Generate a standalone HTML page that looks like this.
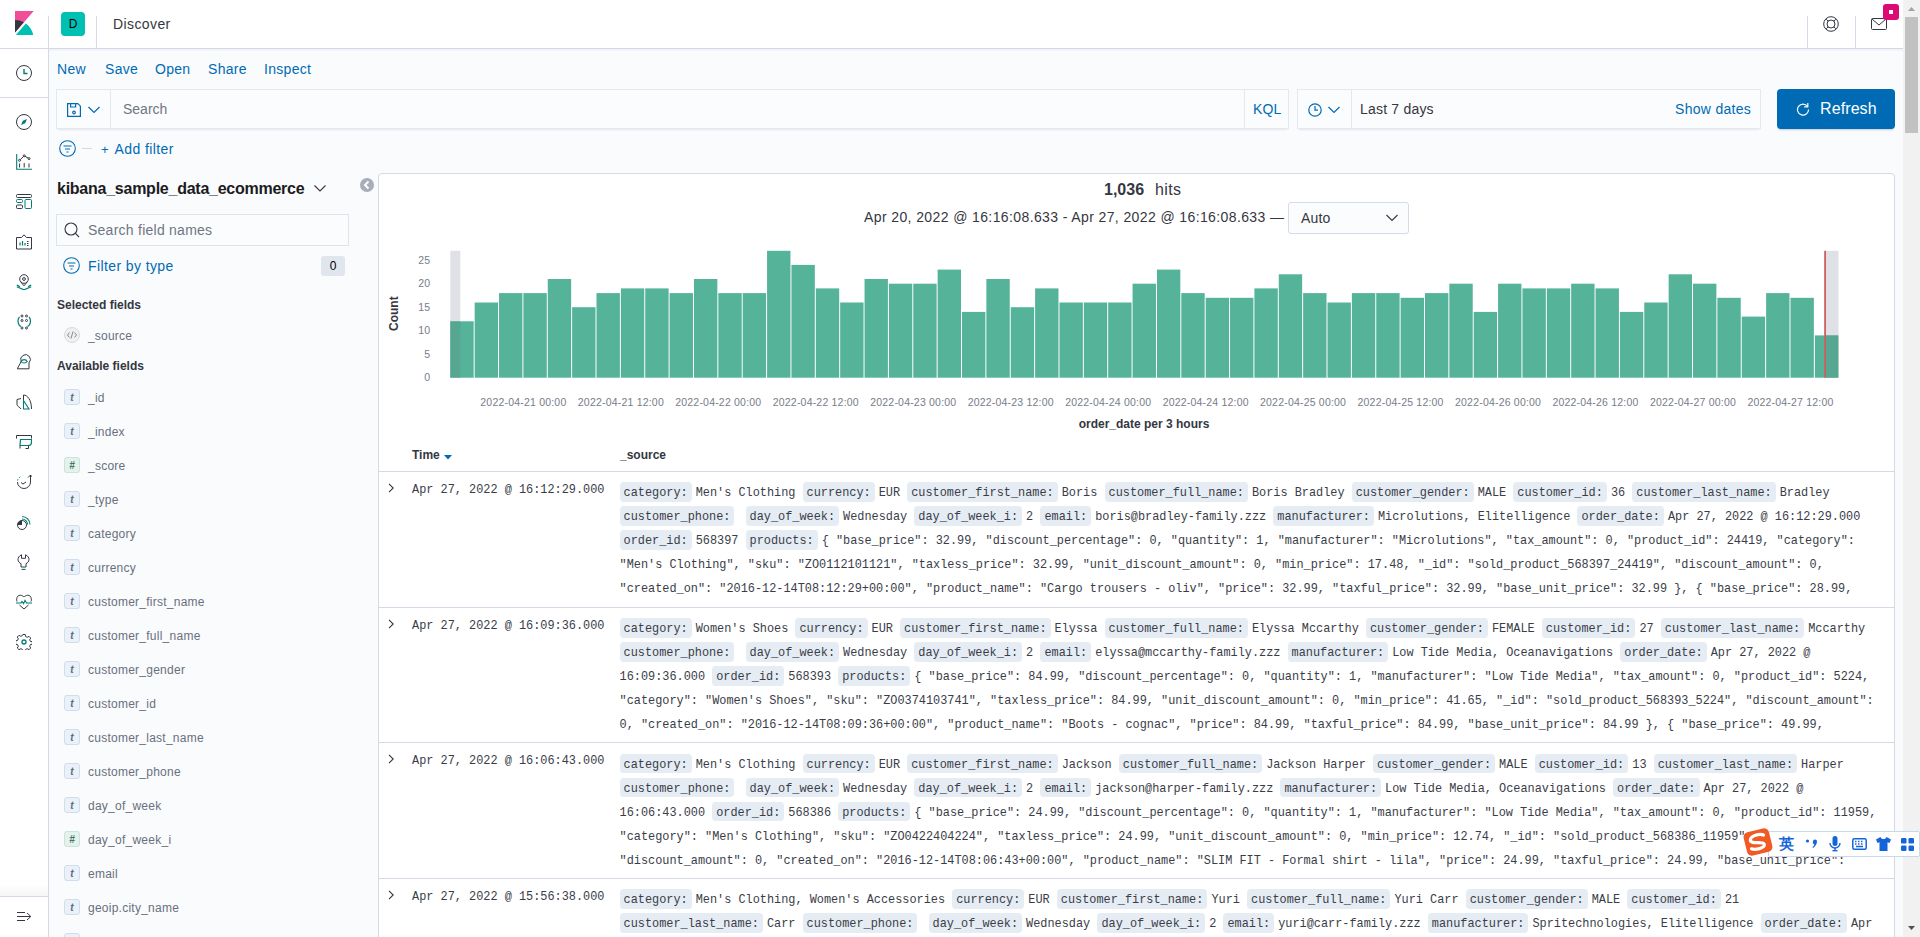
<!DOCTYPE html><html><head><meta charset="utf-8"><style>
*{box-sizing:border-box;margin:0;padding:0}
html,body{width:1920px;height:937px;overflow:hidden;background:#fafbfd;font-family:"Liberation Sans",sans-serif;color:#343741}
.abs{position:absolute}
.t{position:absolute;white-space:pre;line-height:1}
.tm{position:absolute;white-space:pre;font-family:"Liberation Mono",monospace;font-size:11.89px;line-height:24px;color:#3a3d48}
.src{position:absolute;white-space:pre;font-family:"Liberation Mono",monospace;font-size:11.89px;line-height:24px;color:#3a3d48}
.src b{font-weight:normal;background:#e5ecf3;padding:4px 4px 1.7px;margin-right:4px;border-radius:4px}
svg{display:block}
</style></head><body>

<div class="abs" style="left:0;top:0;width:1903px;height:49px;background:#fff;border-bottom:1px solid #d3dae6;box-shadow:0 1px 2px rgba(152,162,179,.15)"></div>
<svg class="abs" style="left:12px;top:11px" width="24" height="24" viewBox="0 0 32 32"><path fill="#F04E98" d="M4 0v28.789L28.935.017z"/><path fill="#343741" d="M4 12v16.789l11.906-13.738A24.721 24.721 0 004 12"/><path fill="#00BFB3" d="M18.479 16.664L6.268 30.754l-1.073 1.237h23.191c-1.252-6.292-4.883-11.719-9.908-15.327"/></svg>
<div class="abs" style="left:48px;top:16px;width:1px;height:32px;background:#d3dae6"></div>
<div class="abs" style="left:96px;top:16px;width:1px;height:32px;background:#d3dae6"></div>
<div class="abs" style="left:61px;top:12px;width:24px;height:24px;background:#00bfb3;border-radius:4px"></div>
<div class="t" style="left:61px;top:18px;width:24px;text-align:center;font-size:12px;color:#000">D</div>
<div class="t" style="left:113px;top:17px;font-size:14px;letter-spacing:.4px;color:#343741">Discover</div>
<div class="abs" style="left:1807px;top:16px;width:1px;height:32px;background:#d3dae6"></div>
<div class="abs" style="left:1855px;top:16px;width:1px;height:32px;background:#d3dae6"></div>
<svg class="abs" style="left:1823px;top:16px" width="16" height="16" viewBox="0 0 16 16" fill="none" stroke="#343741" stroke-width="1"><circle cx="8" cy="8" r="7.3"/><circle cx="8" cy="8" r="4"/><path d="M3.2 3.2l2 2M12.8 3.2l-2 2M3.2 12.8l2-2M12.8 12.8l-2-2"/></svg>
<svg class="abs" style="left:1871px;top:17px" width="16" height="14" viewBox="0 0 16 14" fill="none" stroke="#343741" stroke-width="1"><rect x=".5" y="1.5" width="15" height="11" rx="1"/><path d="M1 2l7 6 7-6"/></svg>
<div class="abs" style="left:1883px;top:4px;width:16px;height:16px;background:#dd0a73;border-radius:3px"></div>
<div class="abs" style="left:1889px;top:10px;width:4px;height:4px;background:#fff"></div>
<div class="abs" style="left:0;top:49px;width:49px;height:888px;background:#fff;border-right:1px solid #d3dae6"></div>
<div class="abs" style="left:0;top:97px;width:48px;height:1px;background:#d3dae6"></div>
<div class="abs" style="left:0;top:884px;width:48px;height:12px;background:linear-gradient(rgba(255,255,255,0),rgba(152,162,179,.1))"></div>
<div class="abs" style="left:0;top:896px;width:48px;height:1px;background:#d3dae6"></div>
<svg class="abs" style="left:16px;top:65px" width="16" height="16" viewBox="0 0 16 16" fill="none"><circle cx="8" cy="8" r="7.5" stroke="#343741"/><path d="M8 4v4.5h3.5" stroke="#017d73" stroke-width="1.4"/></svg>
<svg class="abs" style="left:16px;top:114px" width="16" height="16" viewBox="0 0 16 16" fill="none"><circle cx="8" cy="8" r="7.5" stroke="#343741"/><path d="M11 5L9.2 9.2 5 11 6.8 6.8z" fill="#017d73"/></svg>
<svg class="abs" style="left:16px;top:154px" width="16" height="16" viewBox="0 0 16 16" fill="none"><path d="M.7 0v15.3H16" stroke="#017d73" stroke-width="1.1"/><path d="M3.6 9.5v4M8.2 9v4.5M13 9.5v4" stroke="#343741"/><path d="M3.6 6.3L8.2 1.8 13 4.6" stroke="#343741"/><circle cx="3.6" cy="6.3" r="1" fill="#fff" stroke="#343741"/><circle cx="8.2" cy="1.8" r="1" fill="#fff" stroke="#343741"/><circle cx="13" cy="4.6" r="1" fill="#fff" stroke="#343741"/></svg>
<svg class="abs" style="left:16px;top:194px" width="16" height="16" viewBox="0 0 16 16" fill="none"><rect x=".5" y=".5" width="15" height="3" rx="1" stroke="#343741"/><rect x=".5" y="5.5" width="6" height="3" rx="1" stroke="#017d73"/><rect x=".5" y="11" width="6" height="3.5" rx="1" stroke="#343741"/><rect x="9" y="5.5" width="6.5" height="9" rx="1" stroke="#017d73"/></svg>
<svg class="abs" style="left:16px;top:234px" width="16" height="16" viewBox="0 0 16 16" fill="none"><path d="M.5 3.5h5L8 .8l2.5 2.7h5v11.5H.5z" stroke="#343741"/><path d="M4 11.5v-3M6.5 11.5V7M9 11.5v-2.5" stroke="#017d73" stroke-width="1.2"/><path d="M11 7.5h1.5M11 9.5h1.5M11 11.5h1.5" stroke="#343741"/></svg>
<svg class="abs" style="left:16px;top:274px" width="16" height="16" viewBox="0 0 16 16" fill="none"><circle cx="8" cy="5" r="4.3" stroke="#343741"/><circle cx="8" cy="5" r="1.4" stroke="#343741"/><path d="M5 8.3L8 11.8l3-3.5" stroke="#343741"/><path d="M.8 11l3 1.6M15.2 11l-3 1.6" stroke="#017d73" stroke-width="1.2"/><path d="M.8 12.8l7.2 3 7.2-3" stroke="#017d73" stroke-width="1.2"/></svg>
<svg class="abs" style="left:16px;top:314px" width="16" height="16" viewBox="0 0 16 16" fill="none"><circle cx="6" cy="2" r="1" stroke="#343741"/><circle cx="10.5" cy="2" r="1" stroke="#343741"/><circle cx="6" cy="6.5" r="1" stroke="#343741"/><circle cx="10.5" cy="6.5" r="1" stroke="#343741"/><circle cx="6" cy="14" r="1" stroke="#343741"/><circle cx="10.5" cy="14" r="1" stroke="#343741"/><path d="M3.5 3C1.5 5 1.5 9 3.5 11.5l1.5 1M13 3c2 2 2 6 0 8.5l-1.5 1" stroke="#017d73" stroke-width="1.2"/></svg>
<svg class="abs" style="left:16px;top:354px" width="16" height="16" viewBox="0 0 16 16" fill="none"><path d="M5.2 7.5A4.8 4.8 0 1113 8.8v6H1.3z" stroke="#343741"/><path d="M5 7.5C6.5 5 10 5 11.2 7.5 10 9.5 6.5 9.5 5 7.5z" stroke="#017d73" stroke-width="1.1"/></svg>
<svg class="abs" style="left:16px;top:394px" width="16" height="16" viewBox="0 0 16 16" fill="none"><path d="M5 15c-1-2-4-2.5-4-4.5v-5L5 4.5" stroke="#343741"/><path d="M7.5 15V1c4 0 8 5 8 14" stroke="#343741"/><path d="M7.5 15V6.5l5.5 8.5z" stroke="#017d73" stroke-width="1.1"/></svg>
<svg class="abs" style="left:16px;top:434px" width="16" height="16" viewBox="0 0 16 16" fill="none"><path d="M.5 4.5v-3h15v3M4 14.5V12M12.5 12v2.5H9.5" stroke="#343741"/><path d="M4.5 5.5h11v2.5c0 2-1.5 3.5-3.5 3.5h-8z" stroke="#017d73" stroke-width="1.2"/></svg>
<svg class="abs" style="left:16px;top:474px" width="16" height="16" viewBox="0 0 16 16" fill="none"><path d="M1.5 6.5a6.5 6.5 0 013.5-4" stroke="#017d73" stroke-dasharray="1.5 1.5"/><path d="M1.5 8a6.5 6.5 0 0013 0V1M12 3.5l2.5-2.5 2.5 2.5" stroke="#343741"/><path d="M5 8.5l2 1.5 3-2" stroke="#343741"/></svg>
<svg class="abs" style="left:16px;top:514px" width="16" height="16" viewBox="0 0 16 16" fill="none"><circle cx="6" cy="11" r="4.5" stroke="#343741"/><path d="M6 11V6.5A4.5 4.5 0 001.5 11z" fill="#343741"/><path d="M6 2.5a8 8 0 018 8M6 5a5.5 5.5 0 015.5 5.5" stroke="#017d73" stroke-width="1.2"/></svg>
<svg class="abs" style="left:16px;top:554px" width="16" height="16" viewBox="0 0 16 16" fill="none"><path d="M5.5 .8C3 1.8 2 4 2 5.5c0 2 1.5 3.5 3 4.2V13h5V9.7c1.5-.7 3-2.2 3-4.2 0-1.5-1-3.7-3.5-4.7v3.5h-4z" stroke="#343741"/><path d="M5.5 15.5h4" stroke="#017d73" stroke-width="1.3"/></svg>
<svg class="abs" style="left:16px;top:594px" width="16" height="16" viewBox="0 0 16 16" fill="none"><path d="M1 7.5C.3 6 .5 1.2 4.3 1.2 6.2 1.2 8 3 8 3s1.8-1.8 3.7-1.8C15.5 1.2 15.7 6 15 7.5M3.5 11L8 15l4.5-4" stroke="#343741"/><path d="M0 9h5l1-1.5 1.5 2 1.5-3 1.5 2.5H16" stroke="#017d73" stroke-width="1.2"/></svg>
<svg class="abs" style="left:16px;top:634px" width="16" height="16" viewBox="0 0 16 16" fill="none"><path d="M6.8.5h2.4l.4 2 1.6.8 1.8-1 1.7 1.7-1 1.8.7 1.6 2 .4v2.4l-2 .4-.7 1.6 1 1.8-1.7 1.7-1.8-1-1.6.7-.4 2H6.8l-.4-2-1.6-.7-1.8 1-1.7-1.7 1-1.8-.7-1.6-2-.4V6.8l2-.4.7-1.6-1-1.8L3 1.3l1.8 1 1.6-.8z" stroke="#343741"/><circle cx="8" cy="8" r="2" stroke="#017d73" stroke-width="1.3"/></svg>
<svg class="abs" style="left:17px;top:911px" width="16" height="12" viewBox="0 0 16 12" fill="none" stroke="#343741" stroke-width="1"><path d="M0 1.5h8M0 5.5h13.5M0 9.5h8M10 2l3.8 3.5L10 9"/></svg>
<div class="t" style="left:57px;top:62px;font-size:14px;letter-spacing:.3px;color:#006bb4">New</div>
<div class="t" style="left:105px;top:62px;font-size:14px;letter-spacing:.3px;color:#006bb4">Save</div>
<div class="t" style="left:155px;top:62px;font-size:14px;letter-spacing:.3px;color:#006bb4">Open</div>
<div class="t" style="left:208px;top:62px;font-size:14px;letter-spacing:.3px;color:#006bb4">Share</div>
<div class="t" style="left:264px;top:62px;font-size:14px;letter-spacing:.3px;color:#006bb4">Inspect</div>
<div class="abs" style="left:56px;top:89px;width:1233px;height:40px;background:#fbfcfd;border:1px solid #e4e8ef;box-shadow:0 1px 1px -1px rgba(152,162,179,.2),0 3px 2px -2px rgba(152,162,179,.2)"></div>
<div class="abs" style="left:110px;top:90px;width:1px;height:38px;background:#e4e8ef"></div>
<div class="abs" style="left:1244px;top:90px;width:1px;height:38px;background:#e4e8ef"></div>
<svg class="abs" style="left:67px;top:103px" width="14" height="14" viewBox="0 0 14 14" fill="none" stroke="#006bb4" stroke-width="1.2"><path d="M.6.6h10.2l2.6 2.6v10.2H.6z"/><path d="M3.6.6v3.4h5V.6"/><circle cx="7" cy="9.5" r="1.3"/></svg>
<svg class="abs" style="left:88px;top:106px" width="12" height="8" viewBox="0 0 12 8" fill="none" stroke="#006bb4" stroke-width="1.2"><path d="M.5 1l5.5 5.5L11.5 1"/></svg>
<div class="t" style="left:123px;top:102px;font-size:14px;color:#6f7683">Search</div>
<div class="t" style="left:1253px;top:102px;font-size:14px;letter-spacing:.1px;color:#006bb4">KQL</div>
<div class="abs" style="left:1297px;top:89px;width:464px;height:40px;background:#fbfcfd;border:1px solid #e4e8ef;box-shadow:0 1px 1px -1px rgba(152,162,179,.2),0 3px 2px -2px rgba(152,162,179,.2)"></div>
<div class="abs" style="left:1351px;top:90px;width:1px;height:38px;background:#e4e8ef"></div>
<svg class="abs" style="left:1308px;top:103px" width="14" height="14" viewBox="0 0 14 14" fill="none" stroke="#006bb4" stroke-width="1.2"><circle cx="7" cy="7" r="6.2"/><path d="M7 3v4.2h3"/></svg>
<svg class="abs" style="left:1328px;top:106px" width="12" height="8" viewBox="0 0 12 8" fill="none" stroke="#006bb4" stroke-width="1.2"><path d="M.5 1l5.5 5.5L11.5 1"/></svg>
<div class="t" style="left:1360px;top:102px;font-size:14px;letter-spacing:.2px;color:#343741">Last 7 days</div>
<div class="t" style="left:1675px;top:102px;font-size:14px;letter-spacing:.3px;color:#006bb4">Show dates</div>
<div class="abs" style="left:1777px;top:89px;width:118px;height:40px;background:#006bb4;border-radius:4px;box-shadow:0 2px 2px -1px rgba(54,97,126,.3)"></div>
<svg class="abs" style="left:1796px;top:102px" width="14" height="14" viewBox="0 0 14 14" fill="none" stroke="#fff" stroke-width="1.2"><path d="M11.5 4.5A5.5 5.5 0 1 0 12.5 7.5"/><path d="M11.8 1v3.8H8.2"/></svg>
<div class="t" style="left:1820px;top:101px;font-size:16px;letter-spacing:.1px;color:#fff">Refresh</div>
<svg class="abs" style="left:59px;top:140px" width="17" height="17" viewBox="0 0 17 17" fill="none" stroke="#006bb4" stroke-width="1.1"><circle cx="8.5" cy="8.5" r="7.8"/><path d="M4.5 6h8M6 9h5M7.5 12h2"/></svg>
<div class="abs" style="left:82px;top:148px;width:10px;height:1px;background:#d3dae6"></div>
<div class="t" style="left:101px;top:143px;font-size:13px;color:#006bb4">+</div>
<div class="t" style="left:114.5px;top:142px;font-size:14px;letter-spacing:.4px;color:#006bb4">Add filter</div>
<div class="t" style="left:57px;top:181px;font-size:16px;font-weight:700;letter-spacing:-.25px;color:#1a1c21">kibana_sample_data_ecommerce</div>
<svg class="abs" style="left:314px;top:185px" width="12" height="7" viewBox="0 0 12 7" fill="none" stroke="#343741" stroke-width="1.1"><path d="M.5.5L6 6 11.5.5"/></svg>
<svg class="abs" style="left:360px;top:178px" width="14" height="14" viewBox="0 0 14 14"><circle cx="7" cy="7" r="7" fill="#a7aeb8"/><path d="M8.5 3.5L5 7l3.5 3.5" fill="none" stroke="#fff" stroke-width="2"/></svg>
<div class="abs" style="left:56px;top:214px;width:293px;height:32px;background:#fbfcfd;border:1px solid #dfe4ec"></div>
<svg class="abs" style="left:64px;top:222px" width="16" height="16" viewBox="0 0 16 16" fill="none" stroke="#343741" stroke-width="1.1"><circle cx="7" cy="7" r="6"/><path d="M11.2 11.2L15 15"/></svg>
<div class="t" style="left:88px;top:223px;font-size:14px;letter-spacing:.25px;color:#6f7683">Search field names</div>
<svg class="abs" style="left:63px;top:257px" width="17" height="17" viewBox="0 0 17 17" fill="none" stroke="#006bb4" stroke-width="1.1"><circle cx="8.5" cy="8.5" r="7.8"/><path d="M4.5 6h8M6 9h5M7.5 12h2"/></svg>
<div class="t" style="left:88px;top:259px;font-size:14px;letter-spacing:.4px;color:#006bb4">Filter by type</div>
<div class="abs" style="left:321px;top:256px;width:24px;height:20px;background:#e0e5ee;border-radius:3px"></div>
<div class="t" style="left:321px;top:260px;width:24px;text-align:center;font-size:12px;color:#000">0</div>
<div class="t" style="left:57px;top:299px;font-size:12px;font-weight:700;color:#343741">Selected fields</div>
<svg class="abs" style="left:64px;top:327px" width="16" height="16" viewBox="0 0 16 16" fill="none"><circle cx="8" cy="8" r="7.5" fill="#f0f0f0" stroke="#d9d9d9"/><path d="M5.5 5.5L3.5 8l2 2.5M10.5 5.5l2 2.5-2 2.5M9 4.5L7 11.5" stroke="#7a7a7a" stroke-width=".9"/></svg>
<div class="t" style="left:88px;top:330px;font-size:12px;letter-spacing:.2px;color:#69707d">_source</div>
<div class="t" style="left:57px;top:360px;font-size:12px;font-weight:700;color:#343741">Available fields</div>
<div class="abs" style="left:64px;top:389px;width:16px;height:16px;background:#ebf1f7;border:1px solid #cfdeee;border-radius:3px"></div>
<div class="t" style="left:64px;top:392.5px;width:16px;text-align:center;font-size:10px;font-weight:700;font-style:italic;color:#4e6f8f">t</div>
<div class="t" style="left:88px;top:391.5px;font-size:12px;letter-spacing:.25px;color:#69707d">_id</div>
<div class="abs" style="left:64px;top:423px;width:16px;height:16px;background:#ebf1f7;border:1px solid #cfdeee;border-radius:3px"></div>
<div class="t" style="left:64px;top:426.5px;width:16px;text-align:center;font-size:10px;font-weight:700;font-style:italic;color:#4e6f8f">t</div>
<div class="t" style="left:88px;top:425.5px;font-size:12px;letter-spacing:.25px;color:#69707d">_index</div>
<div class="abs" style="left:64px;top:457px;width:16px;height:16px;background:#e6f1ee;border:1px solid #c9e2da;border-radius:3px"></div>
<div class="t" style="left:64px;top:460.5px;width:16px;text-align:center;font-size:10px;font-weight:700;font-style:italic;color:#3f7a5c">#</div>
<div class="t" style="left:88px;top:459.5px;font-size:12px;letter-spacing:.25px;color:#69707d">_score</div>
<div class="abs" style="left:64px;top:491px;width:16px;height:16px;background:#ebf1f7;border:1px solid #cfdeee;border-radius:3px"></div>
<div class="t" style="left:64px;top:494.5px;width:16px;text-align:center;font-size:10px;font-weight:700;font-style:italic;color:#4e6f8f">t</div>
<div class="t" style="left:88px;top:493.5px;font-size:12px;letter-spacing:.25px;color:#69707d">_type</div>
<div class="abs" style="left:64px;top:525px;width:16px;height:16px;background:#ebf1f7;border:1px solid #cfdeee;border-radius:3px"></div>
<div class="t" style="left:64px;top:528.5px;width:16px;text-align:center;font-size:10px;font-weight:700;font-style:italic;color:#4e6f8f">t</div>
<div class="t" style="left:88px;top:527.5px;font-size:12px;letter-spacing:.25px;color:#69707d">category</div>
<div class="abs" style="left:64px;top:559px;width:16px;height:16px;background:#ebf1f7;border:1px solid #cfdeee;border-radius:3px"></div>
<div class="t" style="left:64px;top:562.5px;width:16px;text-align:center;font-size:10px;font-weight:700;font-style:italic;color:#4e6f8f">t</div>
<div class="t" style="left:88px;top:561.5px;font-size:12px;letter-spacing:.25px;color:#69707d">currency</div>
<div class="abs" style="left:64px;top:593px;width:16px;height:16px;background:#ebf1f7;border:1px solid #cfdeee;border-radius:3px"></div>
<div class="t" style="left:64px;top:596.5px;width:16px;text-align:center;font-size:10px;font-weight:700;font-style:italic;color:#4e6f8f">t</div>
<div class="t" style="left:88px;top:595.5px;font-size:12px;letter-spacing:.25px;color:#69707d">customer_first_name</div>
<div class="abs" style="left:64px;top:627px;width:16px;height:16px;background:#ebf1f7;border:1px solid #cfdeee;border-radius:3px"></div>
<div class="t" style="left:64px;top:630.5px;width:16px;text-align:center;font-size:10px;font-weight:700;font-style:italic;color:#4e6f8f">t</div>
<div class="t" style="left:88px;top:629.5px;font-size:12px;letter-spacing:.25px;color:#69707d">customer_full_name</div>
<div class="abs" style="left:64px;top:661px;width:16px;height:16px;background:#ebf1f7;border:1px solid #cfdeee;border-radius:3px"></div>
<div class="t" style="left:64px;top:664.5px;width:16px;text-align:center;font-size:10px;font-weight:700;font-style:italic;color:#4e6f8f">t</div>
<div class="t" style="left:88px;top:663.5px;font-size:12px;letter-spacing:.25px;color:#69707d">customer_gender</div>
<div class="abs" style="left:64px;top:695px;width:16px;height:16px;background:#ebf1f7;border:1px solid #cfdeee;border-radius:3px"></div>
<div class="t" style="left:64px;top:698.5px;width:16px;text-align:center;font-size:10px;font-weight:700;font-style:italic;color:#4e6f8f">t</div>
<div class="t" style="left:88px;top:697.5px;font-size:12px;letter-spacing:.25px;color:#69707d">customer_id</div>
<div class="abs" style="left:64px;top:729px;width:16px;height:16px;background:#ebf1f7;border:1px solid #cfdeee;border-radius:3px"></div>
<div class="t" style="left:64px;top:732.5px;width:16px;text-align:center;font-size:10px;font-weight:700;font-style:italic;color:#4e6f8f">t</div>
<div class="t" style="left:88px;top:731.5px;font-size:12px;letter-spacing:.25px;color:#69707d">customer_last_name</div>
<div class="abs" style="left:64px;top:763px;width:16px;height:16px;background:#ebf1f7;border:1px solid #cfdeee;border-radius:3px"></div>
<div class="t" style="left:64px;top:766.5px;width:16px;text-align:center;font-size:10px;font-weight:700;font-style:italic;color:#4e6f8f">t</div>
<div class="t" style="left:88px;top:765.5px;font-size:12px;letter-spacing:.25px;color:#69707d">customer_phone</div>
<div class="abs" style="left:64px;top:797px;width:16px;height:16px;background:#ebf1f7;border:1px solid #cfdeee;border-radius:3px"></div>
<div class="t" style="left:64px;top:800.5px;width:16px;text-align:center;font-size:10px;font-weight:700;font-style:italic;color:#4e6f8f">t</div>
<div class="t" style="left:88px;top:799.5px;font-size:12px;letter-spacing:.25px;color:#69707d">day_of_week</div>
<div class="abs" style="left:64px;top:831px;width:16px;height:16px;background:#e6f1ee;border:1px solid #c9e2da;border-radius:3px"></div>
<div class="t" style="left:64px;top:834.5px;width:16px;text-align:center;font-size:10px;font-weight:700;font-style:italic;color:#3f7a5c">#</div>
<div class="t" style="left:88px;top:833.5px;font-size:12px;letter-spacing:.25px;color:#69707d">day_of_week_i</div>
<div class="abs" style="left:64px;top:865px;width:16px;height:16px;background:#ebf1f7;border:1px solid #cfdeee;border-radius:3px"></div>
<div class="t" style="left:64px;top:868.5px;width:16px;text-align:center;font-size:10px;font-weight:700;font-style:italic;color:#4e6f8f">t</div>
<div class="t" style="left:88px;top:867.5px;font-size:12px;letter-spacing:.25px;color:#69707d">email</div>
<div class="abs" style="left:64px;top:899px;width:16px;height:16px;background:#ebf1f7;border:1px solid #cfdeee;border-radius:3px"></div>
<div class="t" style="left:64px;top:902.5px;width:16px;text-align:center;font-size:10px;font-weight:700;font-style:italic;color:#4e6f8f">t</div>
<div class="t" style="left:88px;top:901.5px;font-size:12px;letter-spacing:.25px;color:#69707d">geoip.city_name</div>
<div class="abs" style="left:64px;top:933px;width:16px;height:16px;background:#ebf1f7;border:1px solid #cfdeee;border-radius:3px"></div>
<div class="t" style="left:64px;top:936.5px;width:16px;text-align:center;font-size:10px;font-weight:700;font-style:italic;color:#4e6f8f">t</div>
<div class="abs" style="left:378px;top:173px;width:1517px;height:800px;background:#fff;border:1px solid #d3dae6;border-radius:4px"></div>
<div class="t" style="left:1104px;top:182px;font-size:16px;font-weight:700;color:#343741">1,036</div>
<div class="t" style="left:1155px;top:182px;font-size:16px;letter-spacing:.4px;color:#343741">hits</div>
<div class="t" style="left:864px;top:210px;font-size:14px;letter-spacing:.39px;color:#343741">Apr 20, 2022 @ 16:16:08.633 - Apr 27, 2022 @ 16:16:08.633 —</div>
<div class="abs" style="left:1288px;top:202px;width:121px;height:32px;background:#fbfcfd;border:1px solid #d5dce8;border-radius:3px;box-shadow:0 1px 1px -1px rgba(152,162,179,.2)"></div>
<div class="t" style="left:1301px;top:211px;font-size:14px;letter-spacing:.2px;color:#343741">Auto</div>
<svg class="abs" style="left:1386px;top:214px" width="12" height="8" viewBox="0 0 12 8" fill="none" stroke="#343741" stroke-width="1.1"><path d="M.5 1l5.5 5.5L11.5 1"/></svg>
<svg class="abs" style="left:0;top:0" width="1920" height="937"><rect x="450.3" y="250.80" width="10" height="126.90" fill="#e0e1e6"/><rect x="1825.5" y="250.80" width="13" height="126.90" fill="#e0e1e6"/><rect x="450.30" y="321.30" width="23.37" height="56.40" fill="#54b399"/><rect x="474.67" y="302.50" width="23.37" height="75.20" fill="#54b399"/><rect x="499.03" y="293.10" width="23.37" height="84.60" fill="#54b399"/><rect x="523.40" y="293.10" width="23.37" height="84.60" fill="#54b399"/><rect x="547.77" y="279.00" width="23.37" height="98.70" fill="#54b399"/><rect x="572.13" y="307.20" width="23.37" height="70.50" fill="#54b399"/><rect x="596.50" y="293.10" width="23.37" height="84.60" fill="#54b399"/><rect x="620.87" y="288.40" width="23.37" height="89.30" fill="#54b399"/><rect x="645.24" y="288.40" width="23.37" height="89.30" fill="#54b399"/><rect x="669.60" y="293.10" width="23.37" height="84.60" fill="#54b399"/><rect x="693.97" y="279.00" width="23.37" height="98.70" fill="#54b399"/><rect x="718.34" y="293.10" width="23.37" height="84.60" fill="#54b399"/><rect x="742.70" y="293.10" width="23.37" height="84.60" fill="#54b399"/><rect x="767.07" y="250.80" width="23.37" height="126.90" fill="#54b399"/><rect x="791.44" y="264.90" width="23.37" height="112.80" fill="#54b399"/><rect x="815.81" y="288.40" width="23.37" height="89.30" fill="#54b399"/><rect x="840.17" y="302.50" width="23.37" height="75.20" fill="#54b399"/><rect x="864.54" y="279.00" width="23.37" height="98.70" fill="#54b399"/><rect x="888.91" y="283.70" width="23.37" height="94.00" fill="#54b399"/><rect x="913.27" y="283.70" width="23.37" height="94.00" fill="#54b399"/><rect x="937.64" y="269.60" width="23.37" height="108.10" fill="#54b399"/><rect x="962.01" y="311.90" width="23.37" height="65.80" fill="#54b399"/><rect x="986.37" y="279.00" width="23.37" height="98.70" fill="#54b399"/><rect x="1010.74" y="307.20" width="23.37" height="70.50" fill="#54b399"/><rect x="1035.11" y="288.40" width="23.37" height="89.30" fill="#54b399"/><rect x="1059.48" y="302.50" width="23.37" height="75.20" fill="#54b399"/><rect x="1083.84" y="302.50" width="23.37" height="75.20" fill="#54b399"/><rect x="1108.21" y="302.50" width="23.37" height="75.20" fill="#54b399"/><rect x="1132.58" y="283.70" width="23.37" height="94.00" fill="#54b399"/><rect x="1156.94" y="269.60" width="23.37" height="108.10" fill="#54b399"/><rect x="1181.31" y="293.10" width="23.37" height="84.60" fill="#54b399"/><rect x="1205.68" y="297.80" width="23.37" height="79.90" fill="#54b399"/><rect x="1230.04" y="297.80" width="23.37" height="79.90" fill="#54b399"/><rect x="1254.41" y="288.40" width="23.37" height="89.30" fill="#54b399"/><rect x="1278.78" y="274.30" width="23.37" height="103.40" fill="#54b399"/><rect x="1303.14" y="293.10" width="23.37" height="84.60" fill="#54b399"/><rect x="1327.51" y="302.50" width="23.37" height="75.20" fill="#54b399"/><rect x="1351.88" y="293.10" width="23.37" height="84.60" fill="#54b399"/><rect x="1376.25" y="293.10" width="23.37" height="84.60" fill="#54b399"/><rect x="1400.61" y="297.80" width="23.37" height="79.90" fill="#54b399"/><rect x="1424.98" y="293.10" width="23.37" height="84.60" fill="#54b399"/><rect x="1449.35" y="283.70" width="23.37" height="94.00" fill="#54b399"/><rect x="1473.71" y="311.90" width="23.37" height="65.80" fill="#54b399"/><rect x="1498.08" y="283.70" width="23.37" height="94.00" fill="#54b399"/><rect x="1522.45" y="288.40" width="23.37" height="89.30" fill="#54b399"/><rect x="1546.82" y="288.40" width="23.37" height="89.30" fill="#54b399"/><rect x="1571.18" y="283.70" width="23.37" height="94.00" fill="#54b399"/><rect x="1595.55" y="288.40" width="23.37" height="89.30" fill="#54b399"/><rect x="1619.92" y="311.90" width="23.37" height="65.80" fill="#54b399"/><rect x="1644.28" y="302.50" width="23.37" height="75.20" fill="#54b399"/><rect x="1668.65" y="274.30" width="23.37" height="103.40" fill="#54b399"/><rect x="1693.02" y="283.70" width="23.37" height="94.00" fill="#54b399"/><rect x="1717.38" y="297.80" width="23.37" height="79.90" fill="#54b399"/><rect x="1741.75" y="316.60" width="23.37" height="61.10" fill="#54b399"/><rect x="1766.12" y="293.10" width="23.37" height="84.60" fill="#54b399"/><rect x="1790.48" y="297.80" width="23.37" height="79.90" fill="#54b399"/><rect x="1814.85" y="335.40" width="23.37" height="42.30" fill="#54b399"/><rect x="450.3" y="321.30" width="10" height="56.40" fill="#5a9d8c" opacity=".6"/><rect x="1825.5" y="335.40" width="13" height="42.30" fill="#5a9d8c" opacity=".6"/><rect x="1824.2" y="250.80" width="1.8" height="126.90" fill="#cc5f5f"/></svg>
<div class="t" style="left:400px;top:372.2px;width:30px;text-align:right;font-size:10.5px;color:#777d89">0</div>
<div class="t" style="left:400px;top:348.7px;width:30px;text-align:right;font-size:10.5px;color:#777d89">5</div>
<div class="t" style="left:400px;top:325.2px;width:30px;text-align:right;font-size:10.5px;color:#777d89">10</div>
<div class="t" style="left:400px;top:301.7px;width:30px;text-align:right;font-size:10.5px;color:#777d89">15</div>
<div class="t" style="left:400px;top:278.2px;width:30px;text-align:right;font-size:10.5px;color:#777d89">20</div>
<div class="t" style="left:400px;top:254.7px;width:30px;text-align:right;font-size:10.5px;color:#777d89">25</div>
<div class="t" style="left:377px;top:308px;width:34px;text-align:center;font-size:12px;font-weight:700;color:#343741;transform:rotate(-90deg);transform-origin:17px 6px">Count</div>
<div class="t" style="left:463.4px;top:397px;width:120px;text-align:center;font-size:10.5px;letter-spacing:.2px;color:#777d89">2022-04-21 00:00</div>
<div class="t" style="left:560.9px;top:397px;width:120px;text-align:center;font-size:10.5px;letter-spacing:.2px;color:#777d89">2022-04-21 12:00</div>
<div class="t" style="left:658.3px;top:397px;width:120px;text-align:center;font-size:10.5px;letter-spacing:.2px;color:#777d89">2022-04-22 00:00</div>
<div class="t" style="left:755.8px;top:397px;width:120px;text-align:center;font-size:10.5px;letter-spacing:.2px;color:#777d89">2022-04-22 12:00</div>
<div class="t" style="left:853.3px;top:397px;width:120px;text-align:center;font-size:10.5px;letter-spacing:.2px;color:#777d89">2022-04-23 00:00</div>
<div class="t" style="left:950.7px;top:397px;width:120px;text-align:center;font-size:10.5px;letter-spacing:.2px;color:#777d89">2022-04-23 12:00</div>
<div class="t" style="left:1048.2px;top:397px;width:120px;text-align:center;font-size:10.5px;letter-spacing:.2px;color:#777d89">2022-04-24 00:00</div>
<div class="t" style="left:1145.7px;top:397px;width:120px;text-align:center;font-size:10.5px;letter-spacing:.2px;color:#777d89">2022-04-24 12:00</div>
<div class="t" style="left:1243.1px;top:397px;width:120px;text-align:center;font-size:10.5px;letter-spacing:.2px;color:#777d89">2022-04-25 00:00</div>
<div class="t" style="left:1340.6px;top:397px;width:120px;text-align:center;font-size:10.5px;letter-spacing:.2px;color:#777d89">2022-04-25 12:00</div>
<div class="t" style="left:1438.1px;top:397px;width:120px;text-align:center;font-size:10.5px;letter-spacing:.2px;color:#777d89">2022-04-26 00:00</div>
<div class="t" style="left:1535.5px;top:397px;width:120px;text-align:center;font-size:10.5px;letter-spacing:.2px;color:#777d89">2022-04-26 12:00</div>
<div class="t" style="left:1633.0px;top:397px;width:120px;text-align:center;font-size:10.5px;letter-spacing:.2px;color:#777d89">2022-04-27 00:00</div>
<div class="t" style="left:1730.5px;top:397px;width:120px;text-align:center;font-size:10.5px;letter-spacing:.2px;color:#777d89">2022-04-27 12:00</div>
<div class="t" style="left:1044px;top:418px;width:200px;text-align:center;font-size:12px;font-weight:700;color:#343741">order_date per 3 hours</div>
<div class="t" style="left:412px;top:449px;font-size:12px;font-weight:700;color:#343741">Time</div>
<svg class="abs" style="left:444px;top:455px" width="8" height="5" viewBox="0 0 8 5"><path d="M0 0h8L4 4.5z" fill="#006bb4"/></svg>
<div class="t" style="left:620px;top:449px;font-size:12px;font-weight:700;color:#343741">_source</div>
<div class="abs" style="left:379px;top:471px;width:1515px;height:1px;background:#d3dae6"></div>
<svg class="abs" style="left:388px;top:482.8px" width="7" height="10" viewBox="0 0 7 10" fill="none" stroke="#343741" stroke-width="1.1"><path d="M1 .8L5.2 5 1 9.2"/></svg>
<div class="tm" style="left:412px;top:477.55px">Apr 27, 2022 @ 16:12:29.000</div>
<div class="src" style="left:619.5px;top:481.10px"><b>category:</b>Men&#x27;s Clothing <b>currency:</b>EUR <b>customer_first_name:</b>Boris <b>customer_full_name:</b>Boris Bradley <b>customer_gender:</b>MALE <b>customer_id:</b>36 <b>customer_last_name:</b>Bradley<br><b>customer_phone:</b> <b>day_of_week:</b>Wednesday <b>day_of_week_i:</b>2 <b>email:</b>boris@bradley-family.zzz <b>manufacturer:</b>Microlutions, Elitelligence <b>order_date:</b>Apr 27, 2022 @ 16:12:29.000<br><b>order_id:</b>568397 <b>products:</b>{ &quot;base_price&quot;: 32.99, &quot;discount_percentage&quot;: 0, &quot;quantity&quot;: 1, &quot;manufacturer&quot;: &quot;Microlutions&quot;, &quot;tax_amount&quot;: 0, &quot;product_id&quot;: 24419, &quot;category&quot;:<br>&quot;Men&#x27;s Clothing&quot;, &quot;sku&quot;: &quot;ZO0112101121&quot;, &quot;taxless_price&quot;: 32.99, &quot;unit_discount_amount&quot;: 0, &quot;min_price&quot;: 17.48, &quot;_id&quot;: &quot;sold_product_568397_24419&quot;, &quot;discount_amount&quot;: 0,<br>&quot;created_on&quot;: &quot;2016-12-14T08:12:29+00:00&quot;, &quot;product_name&quot;: &quot;Cargo trousers - oliv&quot;, &quot;price&quot;: 32.99, &quot;taxful_price&quot;: 32.99, &quot;base_unit_price&quot;: 32.99 }, { &quot;base_price&quot;: 28.99,</div>
<div class="abs" style="left:379px;top:606.9px;width:1515px;height:1px;background:#d3dae6"></div>
<svg class="abs" style="left:388px;top:618.9px" width="7" height="10" viewBox="0 0 7 10" fill="none" stroke="#343741" stroke-width="1.1"><path d="M1 .8L5.2 5 1 9.2"/></svg>
<div class="tm" style="left:412px;top:613.65px">Apr 27, 2022 @ 16:09:36.000</div>
<div class="src" style="left:619.5px;top:617.20px"><b>category:</b>Women&#x27;s Shoes <b>currency:</b>EUR <b>customer_first_name:</b>Elyssa <b>customer_full_name:</b>Elyssa Mccarthy <b>customer_gender:</b>FEMALE <b>customer_id:</b>27 <b>customer_last_name:</b>Mccarthy<br><b>customer_phone:</b> <b>day_of_week:</b>Wednesday <b>day_of_week_i:</b>2 <b>email:</b>elyssa@mccarthy-family.zzz <b>manufacturer:</b>Low Tide Media, Oceanavigations <b>order_date:</b>Apr 27, 2022 @<br>16:09:36.000 <b>order_id:</b>568393 <b>products:</b>{ &quot;base_price&quot;: 84.99, &quot;discount_percentage&quot;: 0, &quot;quantity&quot;: 1, &quot;manufacturer&quot;: &quot;Low Tide Media&quot;, &quot;tax_amount&quot;: 0, &quot;product_id&quot;: 5224,<br>&quot;category&quot;: &quot;Women&#x27;s Shoes&quot;, &quot;sku&quot;: &quot;ZO0374103741&quot;, &quot;taxless_price&quot;: 84.99, &quot;unit_discount_amount&quot;: 0, &quot;min_price&quot;: 41.65, &quot;_id&quot;: &quot;sold_product_568393_5224&quot;, &quot;discount_amount&quot;:<br>0, &quot;created_on&quot;: &quot;2016-12-14T08:09:36+00:00&quot;, &quot;product_name&quot;: &quot;Boots - cognac&quot;, &quot;price&quot;: 84.99, &quot;taxful_price&quot;: 84.99, &quot;base_unit_price&quot;: 84.99 }, { &quot;base_price&quot;: 49.99,</div>
<div class="abs" style="left:379px;top:742.4px;width:1515px;height:1px;background:#d3dae6"></div>
<svg class="abs" style="left:388px;top:754.4px" width="7" height="10" viewBox="0 0 7 10" fill="none" stroke="#343741" stroke-width="1.1"><path d="M1 .8L5.2 5 1 9.2"/></svg>
<div class="tm" style="left:412px;top:749.15px">Apr 27, 2022 @ 16:06:43.000</div>
<div class="src" style="left:619.5px;top:752.70px"><b>category:</b>Men&#x27;s Clothing <b>currency:</b>EUR <b>customer_first_name:</b>Jackson <b>customer_full_name:</b>Jackson Harper <b>customer_gender:</b>MALE <b>customer_id:</b>13 <b>customer_last_name:</b>Harper<br><b>customer_phone:</b> <b>day_of_week:</b>Wednesday <b>day_of_week_i:</b>2 <b>email:</b>jackson@harper-family.zzz <b>manufacturer:</b>Low Tide Media, Oceanavigations <b>order_date:</b>Apr 27, 2022 @<br>16:06:43.000 <b>order_id:</b>568386 <b>products:</b>{ &quot;base_price&quot;: 24.99, &quot;discount_percentage&quot;: 0, &quot;quantity&quot;: 1, &quot;manufacturer&quot;: &quot;Low Tide Media&quot;, &quot;tax_amount&quot;: 0, &quot;product_id&quot;: 11959,<br>&quot;category&quot;: &quot;Men&#x27;s Clothing&quot;, &quot;sku&quot;: &quot;ZO0422404224&quot;, &quot;taxless_price&quot;: 24.99, &quot;unit_discount_amount&quot;: 0, &quot;min_price&quot;: 12.74, &quot;_id&quot;: &quot;sold_product_568386_11959&quot;,<br>&quot;discount_amount&quot;: 0, &quot;created_on&quot;: &quot;2016-12-14T08:06:43+00:00&quot;, &quot;product_name&quot;: &quot;SLIM FIT - Formal shirt - lila&quot;, &quot;price&quot;: 24.99, &quot;taxful_price&quot;: 24.99, &quot;base_unit_price&quot;:</div>
<div class="abs" style="left:379px;top:877.9px;width:1515px;height:1px;background:#d3dae6"></div>
<svg class="abs" style="left:388px;top:889.9px" width="7" height="10" viewBox="0 0 7 10" fill="none" stroke="#343741" stroke-width="1.1"><path d="M1 .8L5.2 5 1 9.2"/></svg>
<div class="tm" style="left:412px;top:884.65px">Apr 27, 2022 @ 15:56:38.000</div>
<div class="src" style="left:619.5px;top:888.20px"><b>category:</b>Men&#x27;s Clothing, Women&#x27;s Accessories <b>currency:</b>EUR <b>customer_first_name:</b>Yuri <b>customer_full_name:</b>Yuri Carr <b>customer_gender:</b>MALE <b>customer_id:</b>21<br><b>customer_last_name:</b>Carr <b>customer_phone:</b> <b>day_of_week:</b>Wednesday <b>day_of_week_i:</b>2 <b>email:</b>yuri@carr-family.zzz <b>manufacturer:</b>Spritechnologies, Elitelligence <b>order_date:</b>Apr</div>
<div class="abs" style="left:1903px;top:0;width:17px;height:937px;background:#f1f1f1"></div>
<div class="abs" style="left:1905px;top:17px;width:13px;height:116px;background:#c1c1c1"></div>
<svg class="abs" style="left:1908px;top:7px" width="7" height="4" viewBox="0 0 7 4"><path d="M0 4h7L3.5 0z" fill="#a3a3a3"/></svg>
<svg class="abs" style="left:1908px;top:926px" width="7" height="4" viewBox="0 0 7 4"><path d="M0 0h7L3.5 4z" fill="#505050"/></svg>
<div class="abs" style="left:1768px;top:831px;width:152px;height:26px;background:#fff;border:1px solid #c9d8ee;border-radius:2px"></div>
<svg class="abs" style="left:1741px;top:826px" width="34" height="32" viewBox="0 0 34 32"><g transform="rotate(-14 17 16)"><rect x="4" y="4" width="26" height="24" rx="5" fill="#f05a24"/><path d="M24 10.5C21 8 11 8 10 12.5S23 16 22.5 20 12 23 9 21" fill="none" stroke="#fff" stroke-width="3.2" stroke-linecap="round"/></g></svg>
<div class="t" style="left:1779px;top:836px;font-size:15px;font-weight:700;color:#1565d8">英</div>
<svg class="abs" style="left:1805px;top:837px" width="14" height="14" viewBox="0 0 14 14" fill="#1565d8"><circle cx="2.5" cy="4" r="1.6"/><path d="M8 4.5a2 2 0 014 0c0 3-2 5-4 6.5l-.5-.8c1-1 1.8-2 1.8-3A2 2 0 018 4.5z"/></svg>
<svg class="abs" style="left:1829px;top:836px" width="12" height="16" viewBox="0 0 12 16" fill="#1565d8"><rect x="3.5" y="0" width="5" height="10" rx="2.5"/><path d="M1 7a5 5 0 0010 0" fill="none" stroke="#1565d8" stroke-width="1.4"/><rect x="5.3" y="12" width="1.4" height="2.5"/><rect x="3.5" y="14" width="5" height="1.4"/></svg>
<svg class="abs" style="left:1852px;top:838px" width="15" height="12" viewBox="0 0 15 12"><rect x=".8" y=".8" width="13.4" height="10.4" rx="1.5" fill="none" stroke="#1565d8" stroke-width="1.5"/><path d="M3 3.5h1.5M6 3.5h1.5M9 3.5h1.5M3 6h1.5M6 6h1.5M9 6h1.5M4 8.5h7" stroke="#1565d8" stroke-width="1.3"/></svg>
<svg class="abs" style="left:1876px;top:837px" width="15" height="14" viewBox="0 0 15 14"><path d="M4.5 0L0 2.5l1.5 3.5 2-.8V14h8V5.2l2 .8L15 2.5 10.5 0C10 1.5 9 2 7.5 2S5 1.5 4.5 0z" fill="#1565d8"/></svg>
<svg class="abs" style="left:1901px;top:838px" width="13" height="13" viewBox="0 0 13 13" fill="#1565d8"><rect x="0" y="0" width="5.5" height="5.5" rx="1.3"/><rect x="7.5" y="0" width="5.5" height="5.5" rx="1.3"/><rect x="0" y="7.5" width="5.5" height="5.5" rx="1.3"/><rect x="7.5" y="7.5" width="5.5" height="5.5" rx="1.3"/></svg>
</body></html>
